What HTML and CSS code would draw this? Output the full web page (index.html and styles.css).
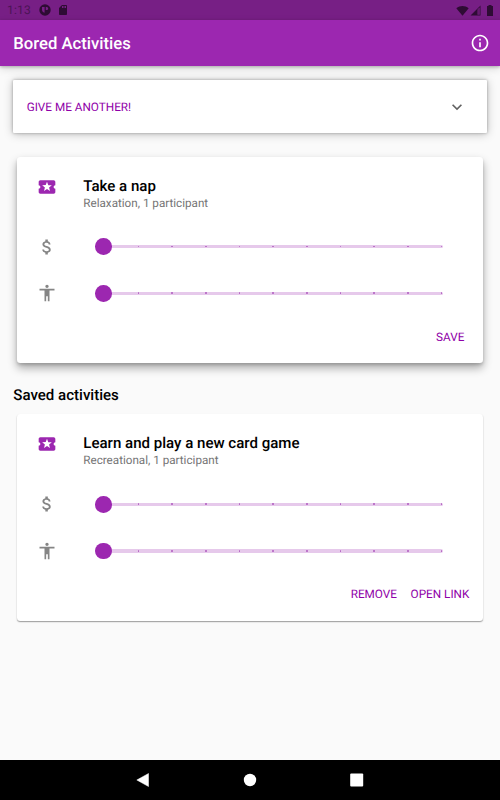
FILE: index.html
```html
<!DOCTYPE html>
<html lang="en">
    <head>
        <title>Bored Activities</title>
        <meta charset="utf-8" />
        <meta name="viewport" content="width=device-width, initial-scale=1" />
        <link rel="stylesheet" href="styles.css">
    </head>
    <body>
        <svg class="sprite" width="0" height="0">
            <symbol id="ticket" viewBox="0 0 24 24">
                <path d="M20 12c0-1.100.9-2 2-2V6c0-1.100-.9-2-2-2H4c-1.100 0-1.990.9-1.990 2v4c1.100 0 1.990.9 1.990 2s-.89 2-2 2v4c0 1.100.9 2 2 2h16c1.100 0 2-.9 2-2v-4c-1.100 0-2-.9-2-2zm-4.420 4.800L12 14.500l-3.580 2.300 1.080-4.120-3.290-2.690 4.240-.25L12 5.800l1.540 3.950 4.240.25-3.290 2.690 1.090 4.110z"/>
            </symbol>
            <symbol id="money" viewBox="0 0 24 24">
                <path d="M11.800 10.900c-2.270-.59-3-1.200-3-2.150 0-1.090 1.010-1.850 2.700-1.850 1.780 0 2.440.85 2.500 2.100h2.210c-.07-1.720-1.120-3.300-3.210-3.810V3h-3v2.160c-1.940.42-3.500 1.680-3.500 3.610 0 2.310 1.910 3.460 4.700 4.130 2.500.6 3 1.480 3 2.410 0 .69-.49 1.790-2.700 1.790-2.060 0-2.870-.92-2.980-2.100h-2.200c.12 2.190 1.760 3.420 3.680 3.830V21h3v-2.150c1.950-.37 3.500-1.500 3.500-3.550 0-2.840-2.430-3.810-4.700-4.400z"/>
            </symbol>
            <symbol id="person" viewBox="0 0 24 24">
                <path d="M12 2c1.100 0 2 .9 2 2s-.9 2-2 2-2-.9-2-2 .9-2 2-2zm9 7h-6v13h-2v-6h-2v6H9V9H3V7h18v2z"/>
            </symbol>
        </svg>

        <div class="status-bar">
            <span class="clock">1:13</span>
            <svg class="status-app" viewBox="0 0 12 12">
                <circle cx="6" cy="6" r="5.700"/>
                <path class="cutout" d="M3 3h2.600v5.800A3 3 0 0 1 3 6.300zM6.800 3h.9a1.500 1.500 0 0 1 0 3h-.9z"/>
            </svg>
            <svg class="status-card" viewBox="0 0 24 24">
                <path d="M18 2h-8L4.020 8 4 20c0 1.100.9 2 2 2h12c1.100 0 2-.9 2-2V4c0-1.100-.9-2-2-2zm-6 6h-2V4h2v4zm3 0h-2V4h2v4zm3 0h-2V4h2v4z"/>
            </svg>
            <div class="status-right">
                <svg width="13" height="11" viewBox="0 0 13 11"><path d="M.3 3.200C4 .2 9 .2 12.700 3.200L6.500 10.700z"/></svg>
                <svg width="11" height="11" viewBox="0 0 11 11"><path d="M10.500.5v10H.5zM7.500 4.500v5.300h2.200V2.300z" fill-rule="evenodd"/><path d="M8.300 4h.7v5.500h-.7z" opacity=".35"/></svg>
                <svg width="8" height="11" viewBox="0 0 8 11"><path d="M2.500 0h3v1H7v10H1V1h1.500z"/></svg>
            </div>
        </div>

        <header class="app-bar">
            <h1>Bored Activities</h1>
            <svg class="info" viewBox="0 0 24 24">
                <path d="M11 7h2v2h-2zm0 4h2v6h-2zm1-9C6.480 2 2 6.480 2 12s4.480 10 10 10 10-4.480 10-10S17.520 2 12 2zm0 18c-4.410 0-8-3.590-8-8s3.590-8 8-8 8 3.590 8 8-3.590 8-8 8z"/>
            </svg>
        </header>

        <main>
            <div class="panel">
                <button>GIVE ME ANOTHER!</button>
                <svg class="chevron" viewBox="0 0 24 24">
                    <path d="M16.590 8.590L12 13.170 7.410 8.590 6 10l6 6 6-6z"/>
                </svg>
            </div>

            <div class="card raised">
                <div class="card-head">
                    <svg class="icon ticket"><use href="#ticket"/></svg>
                    <div>
                        <h2>Take a nap</h2>
                        <p>Relaxation, 1 participant</p>
                    </div>
                </div>
                <div class="row">
                    <svg class="icon"><use href="#money"/></svg>
                    <div class="slider"><i></i><i></i><i></i><i></i><i></i><i></i><i></i><i></i><i></i><i></i></div>
                </div>
                <div class="row">
                    <svg class="icon"><use href="#person"/></svg>
                    <div class="slider"><i></i><i></i><i></i><i></i><i></i><i></i><i></i><i></i><i></i><i></i></div>
                </div>
                <div class="actions save">
                    <button>SAVE</button>
                </div>
            </div>

            <h2 class="section-title">Saved activities</h2>

            <div class="card">
                <div class="card-head">
                    <svg class="icon ticket"><use href="#ticket"/></svg>
                    <div>
                        <h2>Learn and play a new card game</h2>
                        <p>Recreational, 1 participant</p>
                    </div>
                </div>
                <div class="row">
                    <svg class="icon"><use href="#money"/></svg>
                    <div class="slider"><i></i><i></i><i></i><i></i><i></i><i></i><i></i><i></i><i></i><i></i></div>
                </div>
                <div class="row">
                    <svg class="icon"><use href="#person"/></svg>
                    <div class="slider"><i></i><i></i><i></i><i></i><i></i><i></i><i></i><i></i><i></i><i></i></div>
                </div>
                <div class="actions">
                    <button>REMOVE</button>
                    <button>OPEN LINK</button>
                </div>
            </div>
        </main>

        <nav class="nav-bar">
            <svg width="14" height="14" viewBox="0 0 14 14"><path d="M12.500.5v13L.8 7z" stroke="#fff" stroke-linejoin="round" stroke-width=".5"/></svg>
            <svg width="14" height="14" viewBox="0 0 14 14"><circle cx="7" cy="7" r="6.200"/></svg>
            <svg width="14" height="14" viewBox="0 0 14 14"><rect x=".2" y=".5" width="13" height="13" rx="1"/></svg>
        </nav>
    </body>
</html>
```

FILE: styles.css
```css
* {
    box-sizing: border-box;
}

body {
    display: flex;
    flex-direction: column;
    height: 800px;
    margin: 0;
    overflow: hidden;
    background-color: #fafafa;
    color: #000;
    font-family: Roboto, sans-serif;
    text-rendering: geometricPrecision;
}

h1, h2, p {
    margin: 0;
    font-weight: 500;
}

svg {
    display: block;
    flex: none;
}

.sprite {
    position: absolute;
}

button {
    padding: 0;
    border: none;
    background: none;
    color: #8f00a8;
    font: 400 11.75px/16px Roboto, sans-serif;
    text-rendering: geometricPrecision;
    white-space: nowrap;
    cursor: pointer;
}

/* top bars */
.status-bar {
    display: flex;
    align-items: center;
    height: 20px;
    padding: 0 6px 0 7px;
    background-color: #771f85;
    color: #4b1455;
    fill: #2e0c34;
}

.clock {
    width: 31.500px;
    font-size: 12px;
    letter-spacing: 0.2px;
}

.status-app {
    width: 12px;
    height: 12px;
    margin-right: 6.500px;
}

.cutout {
    fill: #771f85;
}

.status-card {
    width: 12px;
    height: 12px;
}

.status-right {
    display: flex;
    gap: 1px;
    margin-left: auto;
}

.status-right svg:last-child {
    margin-left: 4px;
}

.app-bar {
    display: flex;
    align-items: center;
    justify-content: space-between;
    height: 46.33px;
    margin-bottom: 0.34px;
    padding: 0 10px 0 13.33px;
    background-color: #9c27b0;
    box-shadow: 0 1px 3px rgba(0, 0, 0, 0.25), 0 3px 8px rgba(0, 0, 0, 0.13);
    color: #fff;
}

.app-bar h1 {
    padding-top: 2px;
    font-size: 16.67px;
}

.info {
    width: 20px;
    height: 20px;
    fill: #fff;
}

main {
    flex: 1;
    padding: 13.33px 13.33px 0;
}

.panel {
    display: flex;
    align-items: center;
    justify-content: space-between;
    height: 53.33px;
    padding: 0 20px 0 13.33px;
    border-radius: 1px;
    background-color: #fff;
    box-shadow: 0 0 3px rgba(0, 0, 0, 0.3), 0 1px 10px rgba(0, 0, 0, 0.25);
}

.chevron {
    width: 20px;
    height: 20px;
    fill: #616161;
}

/* activity cards */
.card {
    height: 206.67px;
    margin: 0 3.33px;
    padding-top: 20px;
    border-radius: 3.33px;
    background-color: #fff;
    box-shadow: 0 1px 1px rgba(0, 0, 0, 0.28), 0 1px 2px rgba(0, 0, 0, 0.14);
}

.card.raised {
    margin-top: 23.33px;
    box-shadow: 0 2px 3px rgba(0, 0, 0, 0.15), 0 5px 10px rgba(0, 0, 0, 0.33);
}

.card-head {
    display: flex;
    height: 46.67px;
    padding-left: 20px;
}

.icon {
    width: 20px;
    height: 20px;
    margin-right: 26.67px;
    fill: #858585;
}

.ticket {
    fill: #9c27b0;
}

.card-head h2 {
    font-size: 15.060px;
    line-height: 18px;
}

.card-head p {
    color: #757575;
    font-size: 11.67px;
    font-weight: 400;
    line-height: 16px;
}

.row {
    display: flex;
    align-items: center;
    height: 46.67px;
    padding: 0 40.500px 0 20px;
}

/* 10 tick marks, the purple knob sits on the left end */
.slider {
    position: relative;
    display: flex;
    align-items: center;
    flex: 1;
    height: 3.33px;
    margin-left: 20px;
    padding: 0 0.500px 0 34.330px;
    border-radius: 2px;
    background-color: #e6c9eb;
    justify-content: space-between;
}

.slider::before {
    content: "";
    position: absolute;
    left: -8.33px;
    top: -6.67px;
    width: 16.67px;
    height: 16.67px;
    border-radius: 50%;
    background-color: #9c27b0;
}

.slider i {
    width: 1.670px;
    height: 1.670px;
    border-radius: 50%;
    background-color: #b566c3;
}

.actions {
    display: flex;
    align-items: center;
    justify-content: flex-end;
    gap: 13.67px;
    height: 40px;
    padding-right: 14px;
}

.actions.save {
    padding-right: 19px;
}

.section-title {
    height: 51px;
    padding-top: 23px;
    font-size: 15.060px;
    line-height: 18px;
}

/* android navigation */
.nav-bar {
    display: flex;
    align-items: center;
    justify-content: center;
    gap: 93px;
    height: 40px;
    background-color: #000;
    fill: #fff;
}
```
